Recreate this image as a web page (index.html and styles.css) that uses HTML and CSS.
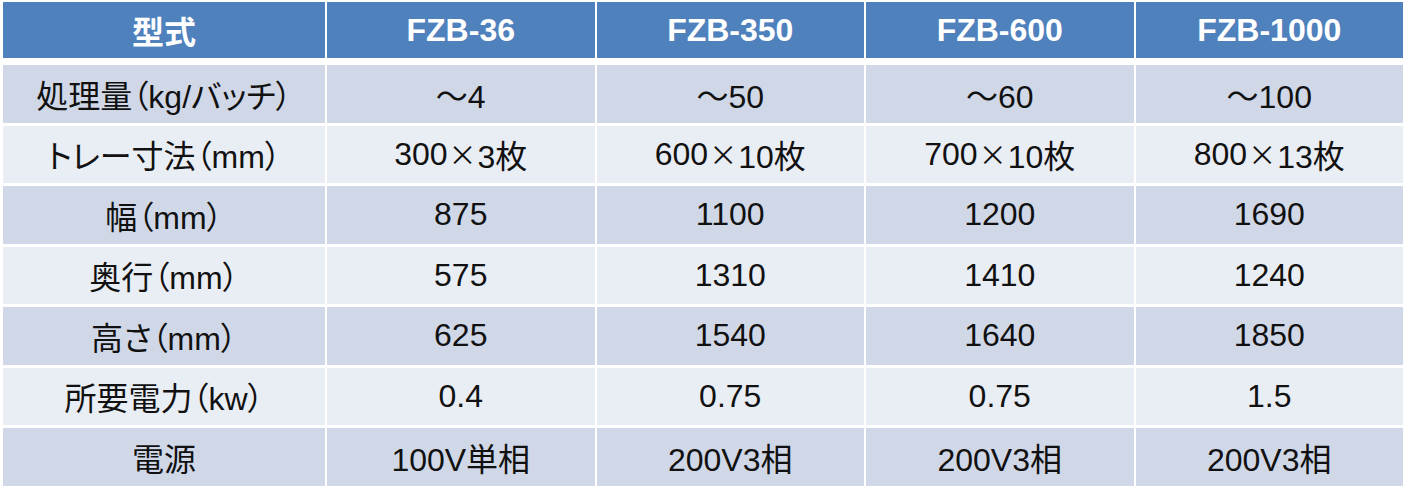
FILE: index.html
```html
<!DOCTYPE html>
<html lang="ja">
<head>
  <meta charset="UTF-8">
  <title>FZB シリーズ 仕様</title>
  <link rel="stylesheet" href="styles.css">
</head>
<body>
  <div class="spec">
    <div class="row head">
      <div class="cell">型式</div>
      <div class="cell">FZB-36</div>
      <div class="cell">FZB-350</div>
      <div class="cell">FZB-600</div>
      <div class="cell">FZB-1000</div>
    </div>

    <div class="rows">
      <div class="row odd">
        <div class="cell label">処理量（kg/バッチ）</div>
        <div class="cell">～4</div>
        <div class="cell">～50</div>
        <div class="cell">～60</div>
        <div class="cell">～100</div>
      </div>
      <div class="row even">
        <div class="cell label">トレー寸法（mm）</div>
        <div class="cell">300<span class="x">×</span>3枚</div>
        <div class="cell">600<span class="x">×</span>10枚</div>
        <div class="cell">700<span class="x">×</span>10枚</div>
        <div class="cell">800<span class="x">×</span>13枚</div>
      </div>
      <div class="row odd">
        <div class="cell label">幅（mm）</div>
        <div class="cell">875</div>
        <div class="cell">1100</div>
        <div class="cell">1200</div>
        <div class="cell">1690</div>
      </div>
      <div class="row even">
        <div class="cell label">奥行（mm）</div>
        <div class="cell">575</div>
        <div class="cell">1310</div>
        <div class="cell">1410</div>
        <div class="cell">1240</div>
      </div>
      <div class="row odd">
        <div class="cell label">高さ（mm）</div>
        <div class="cell">625</div>
        <div class="cell">1540</div>
        <div class="cell">1640</div>
        <div class="cell">1850</div>
      </div>
      <div class="row even">
        <div class="cell label">所要電力（kw）</div>
        <div class="cell">0.4</div>
        <div class="cell">0.75</div>
        <div class="cell">0.75</div>
        <div class="cell">1.5</div>
      </div>
      <div class="row odd">
        <div class="cell label">電源</div>
        <div class="cell">100V単相</div>
        <div class="cell">200V3相</div>
        <div class="cell">200V3相</div>
        <div class="cell">200V3相</div>
      </div>
    </div>
  </div>
</body>
</html>
```

FILE: styles.css
```css
/* spec table, PowerPoint style */
body {
  margin: 0;
  padding: 2px 0 0 3px;
  background: #fff;
  font-family: "Liberation Sans", "Noto Sans CJK JP", sans-serif;
  color: #111;
}

.spec {
  width: 1400px;
}

.row {
  display: grid;
  grid-template-columns: 322px repeat(4, 1fr);
  column-gap: 2px;
}

.cell {
  display: flex;
  align-items: center;
  justify-content: center;
  font-size: 32px;
  white-space: nowrap;
}

/* proportional kana and brackets, like MS PGothic */
.label {
  font-feature-settings: "palt";
}

.head .cell {
  height: 56px;
  background: #4f81bd;
  color: #fff;
  font-weight: bold;
}

.rows {
  margin-top: 7px;
  display: grid;
  grid-template-rows: repeat(7, 57.5px);
  row-gap: 3px;
}

.odd .cell {
  background: #d0d8e8;
}

.even .cell {
  background: #e9edf4;
}

.x {
  font-family: "Noto Sans CJK JP", sans-serif;
  font-size: 28px;
  margin: 0 1px;
}
```
